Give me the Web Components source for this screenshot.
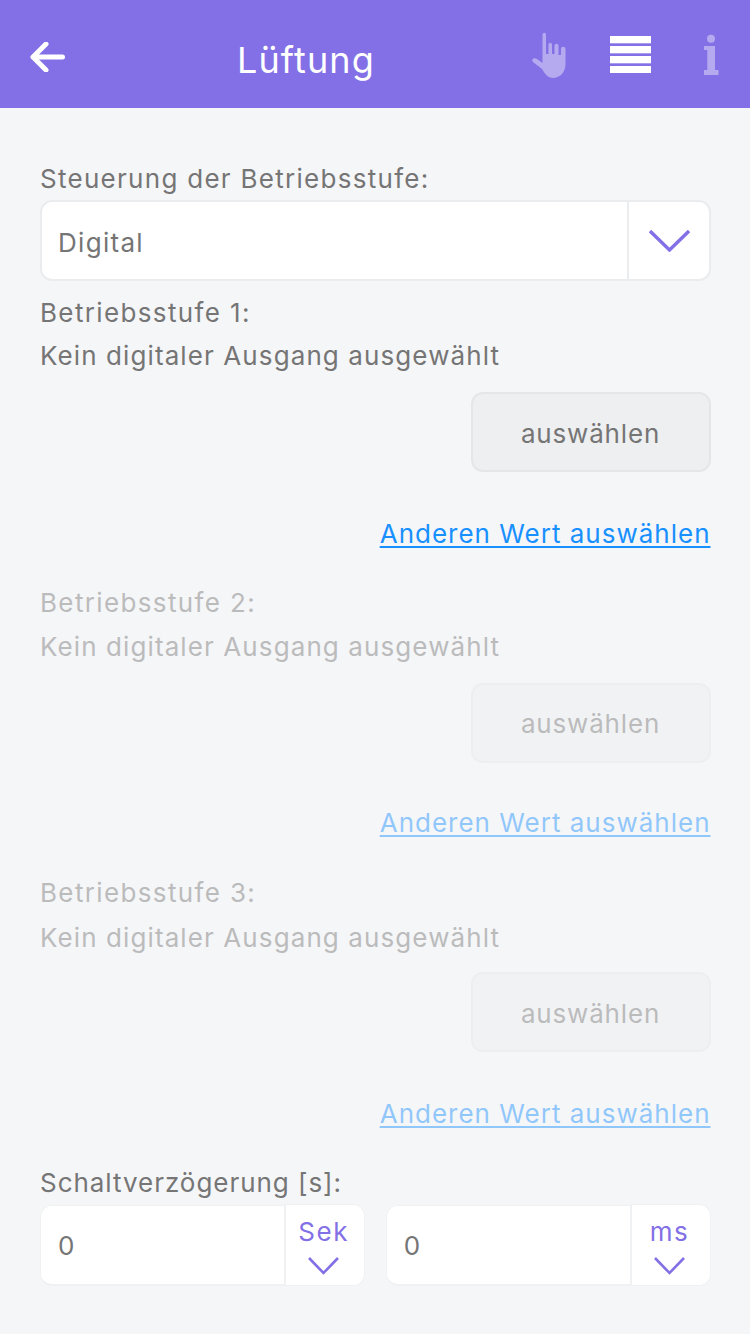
<!DOCTYPE html>
<html lang="de"><head><meta charset="utf-8"><title>Lüftung</title>
<style>
html,body{margin:0;padding:0;background:#f5f6f8;}
body{width:750px;height:1334px;overflow:hidden;font-family:Inter,"Liberation Sans",sans-serif;font-size:26px;color:#757575;}
</style></head><body>
<app-screen>
  <app-header slot="header" title-text="Lüftung"></app-header>
  <field-label style="--ls:1.28px">Steuerung der Betriebsstufe:</field-label>
  <select-box value="Digital"></select-box>
  <output-block n="1"></output-block>
  <output-block n="2" disabled></output-block>
  <output-block n="3" disabled></output-block>
  <field-label style="--ls:.96px">Schaltverzögerung [s]:</field-label>
  <div style="display:flex;gap:21px">
    <unit-input unit="Sek"></unit-input>
    <unit-input unit="ms"></unit-input>
  </div>
</app-screen>
<script>
const chev=(w,h,sw)=>`<svg width="${w}" height="${h}" viewBox="0 0 ${w} ${h}" fill="none" stroke="#8370e6" stroke-width="${sw}"><path d="M1 1 L${w/2} ${h-2} L${w-1} 1"/></svg>`;
function def(name,render){customElements.define(name,class extends HTMLElement{connectedCallback(){if(this.shadowRoot)return;this.attachShadow({mode:'open'}).innerHTML=render(this);}});}
def('app-screen',()=>`<style>:host{display:block}main{padding:48px 39.5px 0 40px}</style><slot name="header"></slot><main><slot></slot></main>`);
def('app-header',el=>`<style>
:host{display:flex;align-items:flex-start;height:108px;background:#8470e6;color:#fff;box-sizing:border-box}
svg{display:block;flex:none}
h1{margin:38px 0 0 170px;font-size:36px;font-weight:400;line-height:44px;width:137px;letter-spacing:1.1px;white-space:nowrap;flex:none}
</style>
<svg style="margin:42px 0 0 29px" width="38" height="30" viewBox="0 0 38 30" fill="none" stroke="#fff" stroke-width="5" stroke-linecap="round" stroke-linejoin="round"><path d="M17 2 L4 15 L17 28 M4 15 H33.500"/></svg>
<h1>${el.getAttribute('title-text')}</h1>
<svg style="margin:31px 0 0 157px" width="36" height="48" viewBox="0 0 36 48"><path fill="#b5a9ef" d="M11.500 4 C11.500 1 15 1 15 4 V23 H17.500 V14 C17.500 11 21 11 21 14 V23 H23.500 V15 C23.500 12 27.500 12 27.500 15 V24 H30 V18 C30 15 34.500 15 34.500 18 V33 C34.500 42 28 47 22 47 C17 47 14 43 11 38 L2 31 C0 28 3 26 6 28 L11.500 32 Z"/></svg>
<svg style="margin:36px 0 0 43px" width="41" height="37" viewBox="0 0 41 37" fill="#fff"><rect width="41" height="7.300"/><rect y="10" width="41" height="7.300"/><rect y="20" width="41" height="7.300"/><rect y="30" width="41" height="7"/></svg>
<svg style="margin:34px 0 0 52px" width="16" height="42" viewBox="0 0 16 42" fill="#b5a9ef"><circle cx="8" cy="4.800" r="4"/><path d="M1 12 H12 V36 H15.500 V41 H1 V36 H4.300 V16 H1 Z"/></svg>`);
def('field-label',()=>`<style>:host{display:block;height:44px;line-height:46px;font-size:26px;letter-spacing:var(--ls,.6px);color:#757575}</style><slot></slot>`);
def('select-box',el=>`<style>
:host{display:flex;box-sizing:border-box;height:81px;margin-bottom:9px;background:#fff;border:2px solid #ebecee;border-radius:12px;font-size:26px;letter-spacing:1.3px;color:#757575;overflow:hidden}
.v{flex:1;display:flex;align-items:center;padding:3px 0 0 16px}
.a{width:80px;border-left:2px solid #ebecee;display:flex;align-items:center;justify-content:center}
svg{margin:1px 0 0 2px}
</style><div class="v">${el.getAttribute('value')}</div><div class="a">${chev(41,22,3.4)}</div>`);
def('output-block',el=>`<style>
:host{display:block;height:290px;font-size:26px;color:#757575}
:host([disabled]) .w{opacity:.45}
p{margin:0;height:44px;line-height:44px;letter-spacing:1.1px}
p.t{line-height:46px;letter-spacing:1.36px}
:host([n="2"]) p:not(.t){line-height:45px}
:host([n="3"]) p:not(.t){line-height:47px}
.r{display:flex;justify-content:flex-end}
.b{box-sizing:border-box;width:240px;height:80px;margin-top:14px;border:2px solid #e5e6e8;border-radius:12px;background:#eeeff1;display:flex;align-items:center;justify-content:center;padding-top:2px;letter-spacing:.82px}
a{display:block;margin-top:39px;line-height:46px;height:44px;color:#1890ff;letter-spacing:1px;text-decoration:underline;text-decoration-thickness:2px;text-underline-offset:3px;text-align:right}
:host([n="2"]) .b{margin-top:15px;padding-top:0}
:host([n="2"]) a{margin-top:37px}
</style><div class="w"><p class="t">Betriebsstufe ${el.getAttribute('n')}:</p><p>Kein digitaler Ausgang ausgewählt</p>
<div class="r"><div class="b">auswählen</div></div><a>Anderen Wert auswählen</a></div>`);
def('unit-input',el=>`<style>
:host{display:flex;flex:1;height:82px;font-size:26px;color:#757575}
.v{flex:1;box-sizing:border-box;height:81px;margin-top:1px;padding-left:17px;display:flex;align-items:center;background:#fff;border:1px solid #f0f1f2;border-bottom-width:2px;border-right:0;border-radius:12px 0 0 12px;letter-spacing:1px}
.u{width:81px;box-sizing:border-box;background:#fff;border:1px solid #f0f1f2;border-left-width:2px;border-radius:0 12px 12px 0;color:#8370e6;display:flex;flex-direction:column;align-items:center;gap:9px;padding:11px 2px 0 0;line-height:32px;letter-spacing:1.6px}
</style><div class="v">0</div><div class="u"><span>${el.getAttribute('unit')}</span>${chev(31,18,2.6)}</div>`);
</script>
</body></html>
